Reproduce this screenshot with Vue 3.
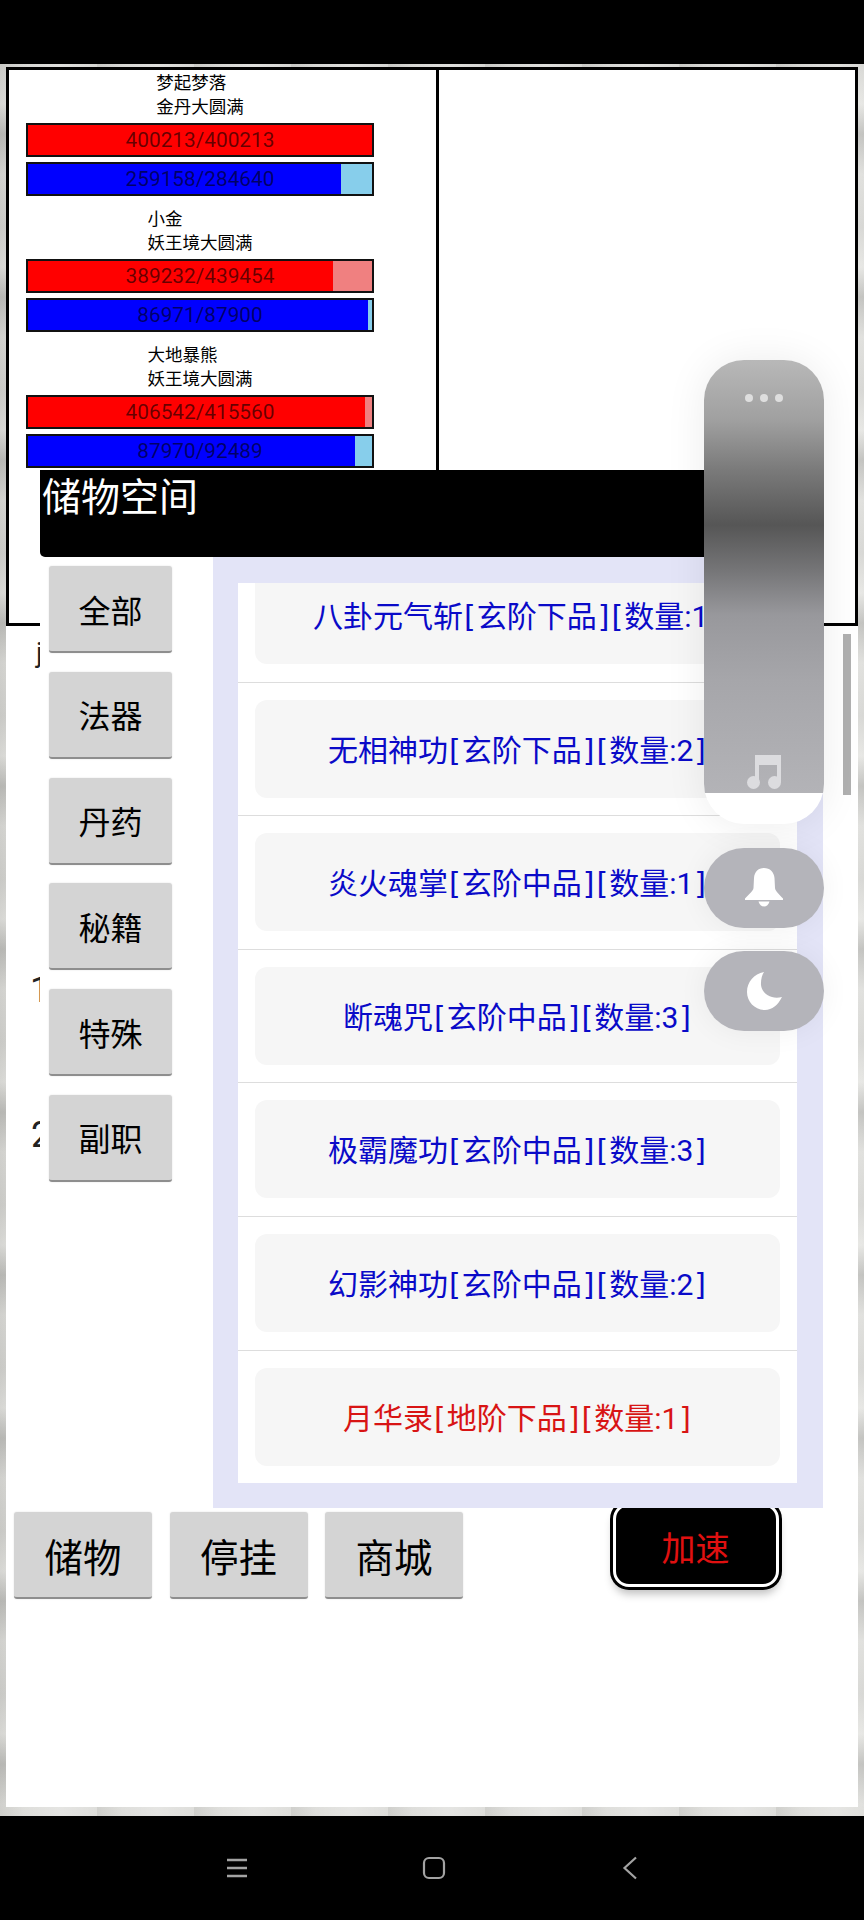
<template>
	<div class="screen">
		<div class="status-bar"></div>

		<div class="wallpaper">
			<div class="page">
				<div class="panels">
					<div class="team-panel">
						<div v-for="unit in units" :key="unit.name" class="unit">
							<div class="unit-title">
								<div class="unit-title-inner">
									<div>{{ unit.name }}</div>
									<div>{{ unit.rank }}</div>
								</div>
							</div>
							<div class="bar bar-hp">
								<div class="bar-fill" :style="{ width: percent(unit.hp, unit.hpMax) }"></div>
								<span class="bar-text">{{ unit.hp }}/{{ unit.hpMax }}</span>
							</div>
							<div class="bar bar-mp">
								<div class="bar-fill" :style="{ width: percent(unit.mp, unit.mpMax) }"></div>
								<span class="bar-text">{{ unit.mp }}/{{ unit.mpMax }}</span>
							</div>
						</div>
					</div>
					<div class="enemy-panel"></div>
				</div>

				<div class="info">
					<div class="info-line line-a">j</div>
					<div class="info-line line-b">1</div>
					<div class="info-line line-c">2</div>
				</div>

				<div class="actions">
					<button class="gray-btn action-btn">储物</button>
					<button class="gray-btn action-btn">停挂</button>
					<button class="gray-btn action-btn">商城</button>
					<button class="speed-btn">加速</button>
				</div>

				<div class="page-scrollbar"></div>

				<div class="dialog">
					<div class="dialog-header">储物空间</div>
					<div class="dialog-body">
						<div class="tabs">
							<button v-for="tab in tabs" :key="tab" class="gray-btn tab-btn">{{ tab }}</button>
						</div>
						<div class="list-frame">
							<div class="list-clip">
								<div class="list">
									<div v-for="item in items" :key="item.label" class="row">
										<div class="item" :class="{ 'item-rare': item.rare }">
											<span v-for="(part, i) in splitLabel(item.label)" :key="i"
												:class="{ bracket: part === '[' || part === ']' }">{{ part }}</span>
										</div>
									</div>
								</div>
							</div>
						</div>
					</div>
				</div>
			</div>
		</div>

		<div class="nav-bar">
			<svg width="24" height="22" viewBox="0 0 24 22">
				<path d="M2 3h20M2 11h20M2 19h20" stroke="#a3a3a3" stroke-width="2.4" fill="none" />
			</svg>
			<svg width="24" height="24" viewBox="0 0 24 24">
				<rect x="2" y="2" width="20" height="20" rx="5" stroke="#a3a3a3" stroke-width="2.2" fill="none" />
			</svg>
			<svg class="nav-back" width="16" height="24" viewBox="0 0 16 24">
				<path d="M14 1.500 2.500 12 14 22.500" stroke="#a3a3a3" stroke-width="2.2" fill="none" />
			</svg>
		</div>

		<div class="float-bar">
			<div class="float-player">
				<div class="float-main">
					<div class="dots"><i></i><i></i><i></i></div>
					<svg width="34" height="35" viewBox="0 0 34 35">
						<path d="M8 1h26v27h-4V11H12v17H8z" fill="#dcdcdf" />
						<circle cx="6.500" cy="28.500" r="6.500" fill="#dcdcdf" />
						<circle cx="27.500" cy="28.500" r="6.500" fill="#dcdcdf" />
					</svg>
				</div>
			</div>
			<div class="float-pill">
				<svg width="38" height="39" viewBox="0 0 38 39">
					<path d="M19 0c6 0 10 4 10.500 10l.5 10c.3 3 4 6 8 10.500V32H0v-1.500C4 26 8.200 23 8.500 20l.5-10C9.500 4 13 0 19 0z" fill="#fff" />
					<path d="M13.500 33.500h11c-.8 3-3 5-5.500 5s-4.700-2-5.500-5z" fill="#fff" />
				</svg>
			</div>
			<div class="float-pill">
				<svg width="35" height="38" viewBox="0 0 35 38">
					<path d="M17 0C7 2 0 10 0 20c0 10 8 18 18 18 7 0 13-5 17-13-10 3-20-3-21-12-.3-5 1-10 3-13z" fill="#fff" />
				</svg>
			</div>
		</div>
	</div>
</template>

<script setup>
const units = [
	{ name: '梦起梦落', rank: '金丹大圆满', hp: 400213, hpMax: 400213, mp: 259158, mpMax: 284640 },
	{ name: '小金', rank: '妖王境大圆满', hp: 389232, hpMax: 439454, mp: 86971, mpMax: 87900 },
	{ name: '大地暴熊', rank: '妖王境大圆满', hp: 406542, hpMax: 415560, mp: 87970, mpMax: 92489 },
]

const tabs = ['全部', '法器', '丹药', '秘籍', '特殊', '副职']

const items = [
	{ label: '八卦元气斩[玄阶下品][数量:1]' },
	{ label: '无相神功[玄阶下品][数量:2]' },
	{ label: '炎火魂掌[玄阶中品][数量:1]' },
	{ label: '断魂咒[玄阶中品][数量:3]' },
	{ label: '极霸魔功[玄阶中品][数量:3]' },
	{ label: '幻影神功[玄阶中品][数量:2]' },
	{ label: '月华录[地阶下品][数量:1]', rare: true },
]

const percent = (value, max) => `${(value / max) * 100}%`

// brackets get their own span, they are wider than the font's
const splitLabel = (label) => label.split(/([[\]])/).filter(Boolean)
</script>

<style>
html,
body {
	background: #000;
}
</style>

<style scoped>
* {
	box-sizing: border-box;
}

.screen {
	position: relative;
	display: flex;
	flex-direction: column;
	width: 864px;
	height: 1920px;
	overflow: hidden;
	background: #000;
	font-family: Roboto, "Noto Sans CJK SC", sans-serif;
	color: #000;
}

.status-bar {
	flex: none;
	height: 64px;
}

.wallpaper {
	flex: 1;
	min-height: 0;
	padding: 3px 6px 9px;
	background:
		repeating-linear-gradient(90deg, rgba(130, 130, 125, 0.16) 0, transparent 25px, rgba(255, 255, 255, 0.2) 60px, transparent 97px),
		repeating-linear-gradient(180deg, #d6d6d3 0, #e6e6e3 40px, #c0c0bd 70px, #dfdfdc 110px, #d6d6d3 163px);
}

.page {
	position: relative;
	height: 1740px;
	background: #fff;
}

.panels {
	display: flex;
	height: 559px;
}

.team-panel {
	width: 432px;
	padding: 1px 0 0 17px;
	border: 3px solid #000;
	border-right-width: 2px;
}

.enemy-panel {
	flex: 1;
	border: 3px solid #000;
	border-left-width: 1px;
}

.unit {
	width: 348px;
	margin-bottom: 11px;
}

.unit-title {
	display: flex;
	justify-content: center;
	margin-bottom: 4px;
	font-size: 17.500px;
	line-height: 24px;
}

.bar {
	position: relative;
	height: 34px;
	margin-bottom: 5px;
	border: 2px solid #111;
}

.bar:last-child {
	margin-bottom: 0;
}

.bar-hp {
	background: #f08080;
}

.bar-hp .bar-fill {
	background: #f00;
}

.bar-mp {
	background: #87ceeb;
}

.bar-mp .bar-fill {
	background: #00f;
}

.bar-fill {
	height: 100%;
}

.bar-text {
	position: absolute;
	inset: 0;
	text-align: center;
	font-size: 20.800px;
	line-height: 30px;
	color: rgba(0, 0, 0, 0.6);
}

.info {
	height: 886px;
	padding: 9px 0 0 25px;
	overflow: hidden;
}

.info-line {
	font-size: 36px;
	line-height: 36px;
	color: #222;
}

.line-a {
	font-size: 28px;
	margin-left: 5px;
}

.line-b {
	margin-top: 301px;
	margin-left: -1px;
}

.line-c {
	margin-top: 109px;
}

.gray-btn {
	display: block;
	padding: 0;
	border: 0;
	border-bottom: 2px solid #8e8e8e;
	border-radius: 3px;
	background: #d4d4d4;
	box-shadow: 0 0 2px rgba(0, 0, 0, 0.12);
	font-family: inherit;
	color: #000;
}

.actions {
	display: flex;
	align-items: flex-start;
	gap: 17.500px;
	padding-left: 8px;
}

.action-btn {
	width: 138px;
	height: 87px;
	font-size: 38.500px;
}

.speed-btn {
	width: 166px;
	height: 84px;
	margin: -9px 0 0 132px;
	padding: 3px 0 0;
	border: 3px solid #fff;
	border-radius: 16px;
	background: #000;
	box-shadow: 0 0 0 3px #000, 0 7px 8px rgba(0, 0, 0, 0.25);
	font-family: inherit;
	font-size: 34px;
	color: #e01010;
}

.page-scrollbar {
	position: absolute;
	top: 567px;
	left: 837px;
	width: 8px;
	height: 161px;
	background: #b0b0b0;
}

.dialog {
	position: absolute;
	top: 403px;
	left: 34px;
	display: flex;
	flex-direction: column;
	width: 783px;
	height: 1038px;
	background: #fff;
}

.dialog-header {
	flex: none;
	height: 87px;
	padding-left: 2px;
	border-radius: 0 0 0 5px;
	background: #000;
	font-size: 39px;
	line-height: 56px;
	color: #fff;
}

.dialog-body {
	flex: 1;
	display: flex;
	min-height: 0;
}

.tabs {
	flex: none;
	display: flex;
	flex-direction: column;
	gap: 18.800px;
	width: 173px;
	padding: 9px 0 0 9px;
}

.tab-btn {
	width: 123px;
	height: 87px;
	font-size: 32px;
}

.list-frame {
	flex: 1;
	padding: 26px 26px 25px 25px;
	background: #e3e4f7;
}

.list-clip {
	height: 100%;
	overflow: hidden;
	background: #fff;
}

.list {
	margin-top: -34px;
}

.row {
	padding: 17px 17px 17.600px;
	border-bottom: 1px solid #ddd;
}

.item {
	height: 98px;
	border-radius: 12px;
	background: #f6f6f6;
	text-align: center;
	font-size: 30px;
	line-height: 102px;
	color: #0a0ac8;
}

.item-rare {
	color: #d81414;
}

.bracket {
	margin-left: 1px;
	font-family: "DejaVu Sans", sans-serif;
	letter-spacing: 1px;
}

.nav-bar {
	flex: none;
	display: flex;
	align-items: center;
	gap: 173px;
	height: 104px;
	padding-left: 225px;
}

.nav-back {
	margin-left: 3px;
}

.float-bar {
	position: absolute;
	top: 360px;
	left: 704px;
	display: flex;
	flex-direction: column;
	gap: 23.500px;
	width: 120px;
}

.float-player {
	height: 464px;
	border-radius: 40px;
	overflow: hidden;
	background: #fff;
	box-shadow: 0 0 40px rgba(0, 0, 0, 0.08);
}

.float-main {
	display: flex;
	flex-direction: column;
	align-items: center;
	justify-content: space-between;
	height: 433px;
	padding: 34px 0 4px;
	background: linear-gradient(180deg, #b8b8b8 0, #a0a0a0 60px, #7a7a7a 110px, #565656 165px, #757577 210px, #98989c 255px, #a6a6aa 320px, #b3b3b7 433px);
}

.dots {
	display: flex;
	gap: 7px;
}

.dots i {
	display: block;
	width: 8px;
	height: 8px;
	border-radius: 50%;
	background: #dedede;
}

.float-pill {
	display: flex;
	align-items: center;
	justify-content: center;
	height: 80px;
	border-radius: 40px;
	background: #b4b4ba;
	box-shadow: 0 0 30px rgba(0, 0, 0, 0.06);
}
</style>
